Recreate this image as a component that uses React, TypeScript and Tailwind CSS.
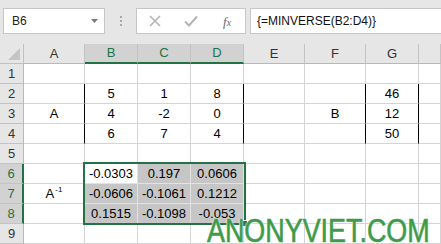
import React from 'react';

const FONT = "font-['Liberation_Sans',Arial,sans-serif]";

const columns = ['A', 'B', 'C', 'D', 'E', 'F', 'G', ''];
const selectedCols = ['B', 'C', 'D'];
const selectedRows = [6, 7, 8];

const values: Record<string, React.ReactNode> = {
  B2: '5', C2: '1', D2: '8',
  A3: 'A', B3: '4', C3: '-2', D3: '0',
  B4: '6', C4: '7', D4: '4',
  G2: '46', F3: 'B', G3: '12', G4: '50',
  B6: '-0.0303', C6: '0.197', D6: '0.0606',
  A7: (
    <span>
      A<sup className="text-[8px] relative -top-[6px] ml-[1px]">-1</sup>
    </span>
  ),
  B7: '-0.0606', C7: '-0.1061', D7: '0.1212',
  B8: '0.1515', C8: '-0.1098', D8: '-0.053',
};

// right-hand black borders (matrix brackets)
const blackRight = ['A2', 'A3', 'A4', 'D2', 'D3', 'D4', 'F2', 'F3', 'F4', 'G2', 'G3', 'G4'];

const FormulaBar = () => (
  <div className="h-[44px] flex items-start pt-[8px] pl-[3px] bg-[#e6e6e6]">
    <div className="w-[102px] h-[26px] bg-white border border-[#c6c6c6] flex items-center justify-between pl-[8px] pr-[5px]">
      <span className="text-[12px] text-[#222]">B6</span>
      <svg width="8" height="5" viewBox="0 0 8 5">
        <path d="M0 0 H7 L3.5 4 Z" fill="#7a7a7a" />
      </svg>
    </div>
    <div className="w-[31px] h-[26px] flex flex-col items-center justify-center gap-[2px]">
      <span className="w-[2px] h-[2px] bg-[#a8a8a8]" />
      <span className="w-[2px] h-[2px] bg-[#a8a8a8]" />
      <span className="w-[2px] h-[2px] bg-[#a8a8a8]" />
    </div>
    <div className="w-[110px] h-[26px] bg-white border border-[#c6c6c6] flex items-center">
      <svg width="12" height="12" viewBox="0 0 12 12" className="ml-[12px]">
        <path d="M1 1 L11 11 M11 1 L1 11" stroke="#b4b4b4" strokeWidth="1.6" />
      </svg>
      <svg width="14" height="12" viewBox="0 0 14 12" className="ml-[23px]">
        <path d="M1 6.5 L5 10.5 L13 1.5" stroke="#b4b4b4" strokeWidth="2" fill="none" />
      </svg>
      <span className="ml-[25px] text-[13px] italic text-[#6a6a6a] font-['Liberation_Serif',serif] leading-none">
        f<span className="text-[10px]">x</span>
      </span>
    </div>
    <div className="ml-[4px] flex-1 -mr-[2px] h-[26px] bg-white border border-[#c6c6c6] flex items-center pl-[6px]">
      <span className="text-[12px] text-[#111]">{'{=MINVERSE(B2:D4)}'}</span>
    </div>
  </div>
);

const Sheet = () => (
  <div className="grid grid-cols-[24px_61px_53px_53px_53px_61px_61px_53px_1fr] grid-rows-[20px_repeat(9,20px)] bg-white">
    {/* corner */}
    <div className="bg-[#e6e6e6] border-r border-b border-[#c0c0c0] flex items-end justify-end pr-[3px] pb-[3px]">
      <svg width="12" height="12" viewBox="0 0 12 12">
        <path d="M12 0 V12 H0 Z" fill="#c4c4c4" />
      </svg>
    </div>
    {columns.map((c) => {
      const sel = selectedCols.includes(c);
      return (
        <div
          key={'h' + c}
          className={
            'flex items-center justify-center text-[13px] border-r border-[#c3c3c3] ' +
            (sel
              ? 'bg-[#d2d2d2] text-[#217346] border-b-2 border-b-[#217346]'
              : 'bg-[#e6e6e6] text-[#333] border-b border-b-[#b8b8b8]')
          }
        >
          {c}
        </div>
      );
    })}
    {Array.from({ length: 9 }, (_, i) => i + 1).map((r) => {
      const rowSel = selectedRows.includes(r);
      return (
        <React.Fragment key={r}>
          <div
            className={
              'flex items-center justify-center text-[13px] border-b border-[#c3c3c3] ' +
              (rowSel
                ? 'bg-[#d2d2d2] text-[#217346] border-r-2 border-r-[#217346]'
                : 'bg-[#e6e6e6] text-[#333] border-r border-r-[#b8b8b8]')
            }
          >
            {r}
          </div>
          {columns.map((c) => {
            const id = c + r;
            const inSel = rowSel && selectedCols.includes(c);
            const active = id === 'B6';
            let cls = 'flex items-center justify-center text-[13px] text-black border-r border-b ';
            if (inSel) cls += active ? 'bg-white border-[#e2e2e2] relative ' : 'bg-[#c6c6c6] border-[#e2e2e2] ';
            else cls += 'border-[#d4d4d4] ';
            if (blackRight.includes(id)) cls += 'border-r-black ';
            return (
              <div key={id} className={cls}>
                {values[id] ?? null}
                {active && (
                  // selection outline for B6:D8, drawn over the range
                  <div className="absolute z-10 -left-[2px] -top-[2px] w-[163px] h-[63px] border-2 border-[#217346] pointer-events-none">
                    <div className="absolute -right-[4px] -bottom-[4px] w-[7px] h-[7px] bg-[#217346] border border-white" />
                  </div>
                )}
              </div>
            );
          })}
        </React.Fragment>
      );
    })}
  </div>
);

export default function App() {
  return (
    <div className={`${FONT} w-[441px] h-[244px] overflow-hidden relative bg-white`}>
      <FormulaBar />
      <Sheet />
      <div className="absolute z-20 left-[207px] top-[214px] origin-left scale-x-[0.815] text-[33px] leading-none text-[#3f9b4a] whitespace-nowrap [text-shadow:0_0_2px_#fff,0_0_2px_#fff,0_0_1px_#fff] [-webkit-text-stroke:0.6px_#3f9b4a]">
        ANONYVIET.COM
      </div>
    </div>
  );
}
